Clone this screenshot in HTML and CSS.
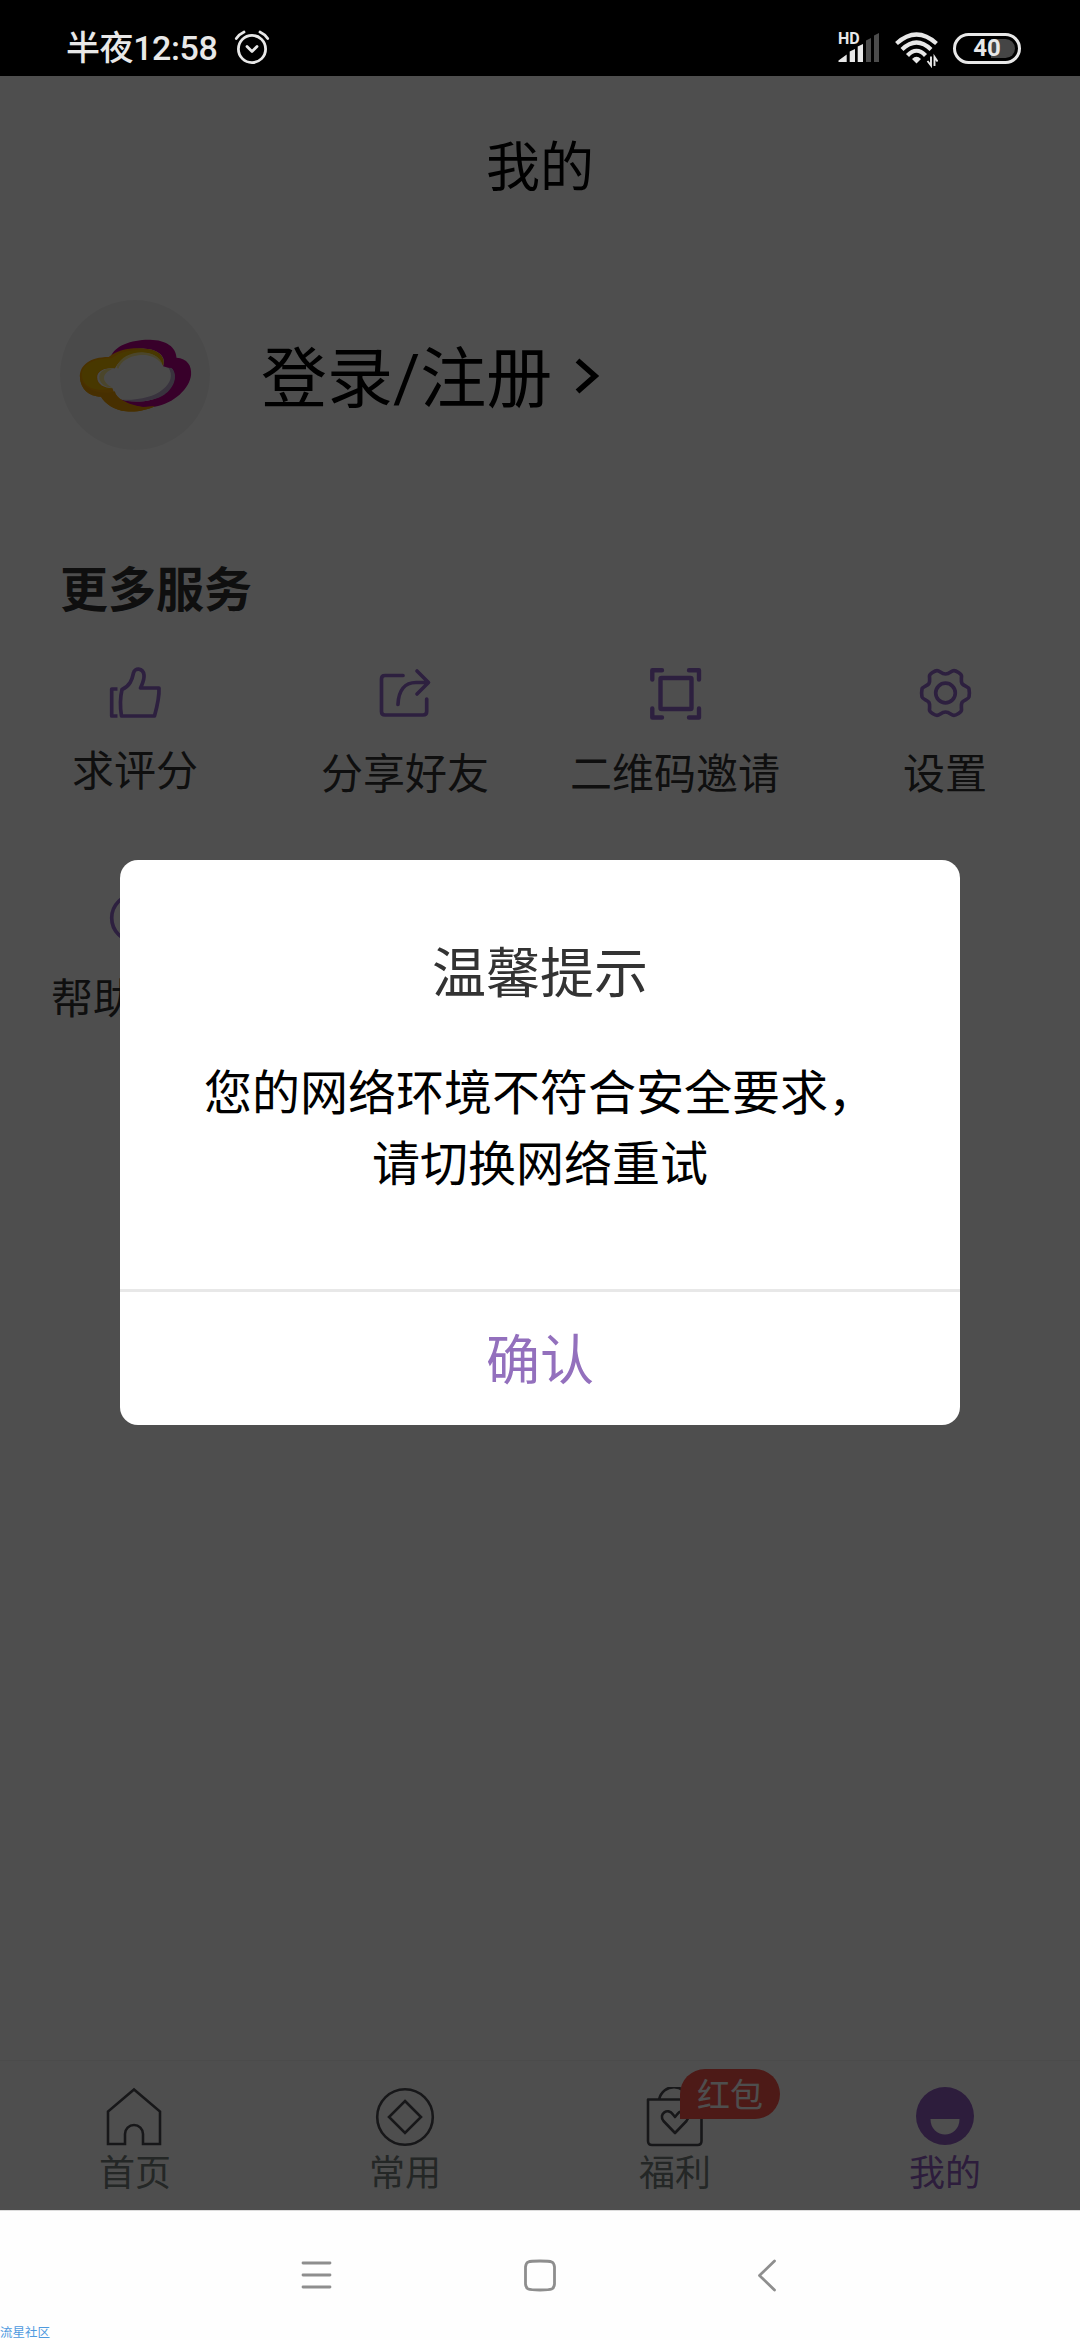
FILE: index.html
```html
<!DOCTYPE html>
<html lang="zh-CN">
<head>
<meta charset="utf-8">
<title>我的</title>
<link rel="stylesheet" href="styles.css">
</head>
<body>
<div class="phone">
  <div class="status">
    <span class="time">半夜12:58</span>
    <svg class="alarm" width="36" height="36" viewBox="0 0 36 36" fill="none" stroke="#e8e8e8" stroke-width="2.8" stroke-linecap="round" stroke-linejoin="round">
      <circle cx="18" cy="20" r="13.6"/>
      <path d="M13 17.5l5 5 5-5"/>
      <path d="M2.300 9.500Q5.500 5 10 3M33.700 9.500Q30.500 5 26 3"/>
    </svg>
    <div class="status-right">
      <div class="signal">
        <span class="hd">HD</span>
        <svg width="42" height="30" viewBox="0 0 42 30">
          <g fill="#e8e8e8"><path d="M0.500 29v-1.500L8.700 21.500V29zM11.700 29V18.500L17 16V29zM19.700 29V13.500L25 11V29z"/></g>
          <g fill="#4c4c4c"><path d="M28 29V7.500L33 5V29zM36 29V2.500L41 0V29z"/></g>
        </svg>
      </div>
      <svg class="wifi" width="43" height="36" viewBox="0 0 43 36" fill="none" stroke="#e8e8e8">
        <path d="M1.500 11.500Q21.500-6.500 41.500 11.500" stroke-width="4.200"/>
        <path d="M7 17.500Q21.500 3.500 36 17.500" stroke-width="4.200"/>
        <path d="M12.500 23.500Q21.500 14 30.500 23.500" stroke-width="4.200"/>
        <path d="M17 27Q21.500 22.500 26 27L21.500 31.500z" fill="#e8e8e8" stroke="none"/>
        <path d="M36 24.500v9l-3.500-4.500M39.500 34v-9l3 4.500" stroke-width="1.900"/>
      </svg>
      <div class="battery"><span class="battery-rest"></span><span class="battery-text">40</span></div>
    </div>
  </div>

  <div class="app">
    <header class="header">我的</header>
    <div class="profile">
      <div class="avatar">
        <svg width="115" height="75" viewBox="100 175 300 225" preserveAspectRatio="none">
          <path fill="#b8008a" d="M186 230C196 198 240 179 288 180C330 181 356 202 357 234C385 236 397 258 395 285C392 325 350 372 300 381C260 388 220 378 202 356C240 372 290 368 322 345C348 324 360 292 346 268L322 260C332 232 310 209 275 207C240 205 210 214 186 230Z"/>
          <path fill="#b9a6cb" d="M344 265C362 285 352 325 325 345C300 364 250 372 215 360C260 362 300 350 320 330C343 310 348 285 336 264Z"/>
          <path fill="#f0a000" d="M105 292C104 258 130 232 180 232C205 209 240 203 275 207C310 209 330 232 322 260C318 230 298 216 268 216C230 218 208 240 196 266C170 262 150 275 150 293C150 314 168 326 190 326C196 355 230 376 270 382L300 380C280 392 252 398 225 395C195 391 170 372 160 351C128 351 107 330 105 292Z"/>
          <path fill="#ecb800" d="M110 286C111 255 140 236 188 236C216 212 252 209 282 211C312 216 327 236 321 257C313 230 294 219 265 219C230 222 207 240 196 266C165 262 146 276 148 296C150 318 170 329 190 326C150 338 112 325 110 286Z"/>
          <path fill="#e89a00" d="M105 285C107 312 125 330 155 337C172 341 184 340 196 335C202 359 224 377 270 383L300 380C280 392 252 398 225 395C195 391 170 372 160 351C128 351 104 325 105 285Z"/>
          <path fill="#f5e58c" d="M200 262C212 233 235 219 268 218C298 220 316 236 319 253C302 231 282 224 258 227C232 231 212 245 205 268ZM194 266C164 264 149 282 158 305C164 318 176 324 190 324C162 308 158 282 194 266Z"/>
        </svg>
      </div>
      <span class="login">登录/注册</span>
      <svg class="chevron" width="28" height="38" viewBox="0 0 28 38" fill="none" stroke="#000" stroke-width="5.600"><path d="M3.500 3.500L21 19L3.500 34.500" /></svg>
    </div>

    <h2 class="section-title">更多服务</h2>
    <div class="services">
      <div class="service service-rate">
        <svg width="54" height="54" viewBox="0 0 54 54" fill="none" stroke="#9468cf" stroke-width="3.700" stroke-linejoin="round">
          <path d="M9.500 23H3.700V50H9.500" />
          <path d="M13.500 50C12 41 12 32 14 23.500C22 20 24 14 25.500 7C26.500 1.500 35 1.500 36 9C36.500 14 34.500 17 32.500 22H51C51.500 32 49 41 46.500 50Z"/>
        </svg>
        <span class="label">求评分</span>
      </div>
      <div class="service">
        <svg width="54" height="54" viewBox="0 0 54 54" fill="none" stroke="#9468cf" stroke-width="3.700" stroke-linecap="round" stroke-linejoin="round">
          <path d="M25 9.500H7Q3.500 9.500 3.500 13V45.500Q3.500 49 7 49H45Q48.700 49 48.700 45.500V33"/>
          <path d="M20 38.500C20.500 24 27 16.500 38 16.500H50M39 5L50.500 16.500L39 28"/>
        </svg>
        <span class="label">分享好友</span>
      </div>
      <div class="service">
        <svg width="54" height="54" viewBox="0 0 54 54" fill="none" stroke="#9468cf" stroke-width="4.400" stroke-linecap="round" stroke-linejoin="round">
          <rect x="12.500" y="12" width="31" height="31" rx="1"/>
          <path d="M4.300 13.500V4.200H14M41 4.200H51V13.500M51 42.500V51.500H41M14 51.500H4.300V42.500"/>
        </svg>
        <span class="label">二维码邀请</span>
      </div>
      <div class="service">
        <svg width="54" height="54" viewBox="0 0 54 54" fill="none" stroke="#9468cf" stroke-width="3.700" stroke-linejoin="round">
          <circle cx="27.500" cy="27" r="9.800"/>
          <path d="M27.500 8C32 8 33 4.700 36 4.700C38 4.700 43.500 7.800 43.500 10C43.500 13 42.800 15.500 44 17.500C45.500 20 50.500 20.500 51 23C51.500 25.500 51.500 28.500 51 31C50.500 33.500 45.500 34 44 36.500C42.800 38.500 43.500 41 43.500 44C43.500 46.200 38 49.300 36 49.300C33 49.300 32 46 27.500 46C23 46 22 49.300 19 49.300C17 49.300 11.500 46.200 11.500 44C11.500 41 12.200 38.500 11 36.500C9.500 34 4.500 33.500 4 31C3.500 28.500 3.500 25.500 4 23C4.500 20.500 9.500 20 11 17.500C12.200 15.500 11.500 13 11.500 10C11.500 7.800 17 4.700 19 4.700C22 4.700 23 8 27.500 8Z"/>
        </svg>
        <span class="label">设置</span>
      </div>
      <div class="service">
        <svg width="54" height="54" viewBox="0 0 54 54" fill="none" stroke="#9468cf" stroke-width="3.700"><circle cx="27" cy="27" r="23.300"/></svg>
        <span class="label">帮助中心</span>
      </div>
    </div>

    <nav class="tabs">
      <div class="tab">
        <svg width="60" height="60" viewBox="0 0 60 60" fill="none" stroke="#4c4c52" stroke-width="2.600">
          <path d="M3 57V24.500L29 2.500L55 24.500V57H38V47A9 9 0 0 0 20 47V57Z"/>
        </svg>
        <span>首页</span>
      </div>
      <div class="tab">
        <svg width="60" height="60" viewBox="0 0 60 60" fill="none" stroke="#4c4c52" stroke-width="2.600">
          <circle cx="30" cy="30" r="27.800"/><path d="M30 14L46 30L30 46L14 30Z"/>
        </svg>
        <span>常用</span>
      </div>
      <div class="tab">
        <svg width="60" height="60" viewBox="0 0 60 60" fill="none" stroke="#4c4c52" stroke-width="2.600" stroke-linejoin="round">
          <path d="M3 12.500H56.500V54Q56.500 58 52.500 58H7Q3 58 3 54ZM14 12.500C18-4 40-4 44 12.500"/>
          <path d="M30 46L18.500 34C13 27 23 20 28 27.500L30 30L32 27.500C37 20 47 27 41.500 34Z"/>
        </svg>
        <span>福利</span>
        <b class="badge">红包</b>
      </div>
      <div class="tab tab-active">
        <svg width="60" height="60" viewBox="0 0 60 60">
          <circle cx="30" cy="29" r="29" fill="#9260c4"/><path d="M15.500 32H44.500C44.500 52.500 15.500 52.500 15.500 32Z" fill="#fff"/>
        </svg>
        <span>我的</span>
      </div>
    </nav>

    <div class="mask">
      <div class="dialog">
        <div class="dialog-title">温馨提示</div>
        <div class="dialog-body">您的网络环境不符合安全要求，<br>请切换网络重试</div>
        <div class="dialog-button">确认</div>
      </div>
    </div>
  </div>

  <div class="sysnav">
    <svg width="36" height="36" viewBox="-2 0 36 36" stroke="#8e8e8e" stroke-width="2.800" stroke-linecap="round"><path d="M4 5H31M4 17H31M4 29H31"/></svg>
    <svg width="36" height="36" viewBox="0 0 36 36" fill="none" stroke="#8e8e8e" stroke-width="2.800"><path d="M18 3C30.500 3 32 3.500 32.500 9V26C32 31.500 30.500 32 18 32S4 31.500 3.500 26V9C4 3.500 5.500 3 18 3Z"/></svg>
    <svg width="36" height="36" viewBox="-2 0 36 36" fill="none" stroke="#8e8e8e" stroke-width="2.800" stroke-linecap="round" stroke-linejoin="round"><path d="M25.500 3L10.500 17.500L25.500 32"/></svg>
    <span class="watermark">流星社区</span>
  </div>
</div>
</body>
</html>
```
FILE: styles.css
```css
* { box-sizing: border-box; }
body {
  margin: 0;
  font-family: "Noto Sans CJK SC", sans-serif;
  background: #fff;
}
svg { display: block; flex: none; }
.phone { width: 1080px; height: 2340px; display: flex; flex-direction: column; overflow: hidden; }

.status {
  height: 76px;
  background: #000;
  color: #e8e8e8;
  display: flex;
  align-items: center;
  padding: 20px 59px 0 66px;
}
.time { font: 500 34px/40px Roboto, "Noto Sans CJK SC", sans-serif; letter-spacing: -.4px; width: 168px; white-space: nowrap; }
.alarm { margin-top: -2px; }
.status-right { margin-left: auto; display: flex; align-items: center; }
.signal { position: relative; margin-right: 15px; }
.hd { position: absolute; left: 0; top: -3px; font: 700 16px/18px Roboto, sans-serif; }
.wifi { margin-right: 15px; margin-top: 3px; }
.battery {
  position: relative;
  width: 68px;
  height: 31px;
  border: 3px solid #e8e8e8;
  border-radius: 16px;
  display: flex;
  align-items: center;
  justify-content: center;
}
.battery-rest { position: absolute; right: 3px; top: 3px; width: 24px; height: 19px; background: #454545; border-radius: 0 10px 10px 0; }
.battery-text { position: relative; font: 700 24px/25px Roboto, sans-serif; }

.app { position: relative; height: 2134px; display: flex; flex-direction: column; background: #fff; }
.header { height: 174px; line-height: 176px; text-align: center; font-size: 54px; color: #000; }
.profile { margin-top: 50px; padding-left: 60px; height: 150px; display: flex; align-items: center; }
.avatar { width: 150px; height: 150px; border-radius: 50%; background: #f3f3f3; display: flex; align-items: center; justify-content: center; }
.login { margin-left: 51px; padding-top: 9px; font: 66px/90px Roboto, "Noto Sans CJK SC", sans-serif; color: #000; }
.chevron { margin-left: 22px; margin-top: 2px; }

.section-title { margin: 106px 0 0 60px; font-size: 48px; line-height: 60px; font-weight: 700; color: #333; }
.services { margin-top: 50px; display: grid; grid-template-columns: repeat(4, 1fr); row-gap: 90px; }
.service { height: 135px; display: flex; flex-direction: column; align-items: center; gap: 21px; }
.service-rate { gap: 18px; }
.label { font-size: 42px; line-height: 60px; color: #333; white-space: nowrap; }

.tabs { margin-top: auto; height: 150px; border-top: 1px solid #f4f4f4; padding-top: 26px; display: grid; grid-template-columns: repeat(4, 1fr); }
.tab { position: relative; display: flex; flex-direction: column; align-items: center; gap: 3px; font-size: 36px; line-height: 40px; color: #76807d; }
.tab-active { color: #9260c4; }
.badge {
  position: absolute;
  left: 140px;
  top: -18px;
  width: 100px;
  height: 50px;
  border-radius: 25px 25px 25px 0;
  background: #fc554b;
  color: #fff;
  font-size: 33px;
  line-height: 48px;
  font-weight: 400;
  text-align: center;
}

.mask { position: absolute; inset: 0; background: rgba(0, 0, 0, .694); display: flex; align-items: center; justify-content: center; padding-bottom: 1px; }
.dialog { width: 840px; height: 565px; border-radius: 18px; background: #fff; text-align: center; display: flex; flex-direction: column; overflow: hidden; }
.dialog-title { margin-top: 70px; font-size: 54px; line-height: 80px; color: #333; }
.dialog-body { margin-top: 44px; font-size: 48px; line-height: 71px; color: #000; }
.dialog-button { margin-top: auto; height: 136px; border-top: 3px solid #e8e8e8; font-size: 54px; line-height: 130px; color: #9370bd; }

.sysnav { position: relative; height: 130px; background: #fefefe; border-top: 1px solid #ddd; display: flex; align-items: center; justify-content: center; gap: 189px; }
.watermark { position: absolute; left: 0; bottom: 0; font-size: 12.5px; line-height: 17px; color: #4f9ade; }
```
